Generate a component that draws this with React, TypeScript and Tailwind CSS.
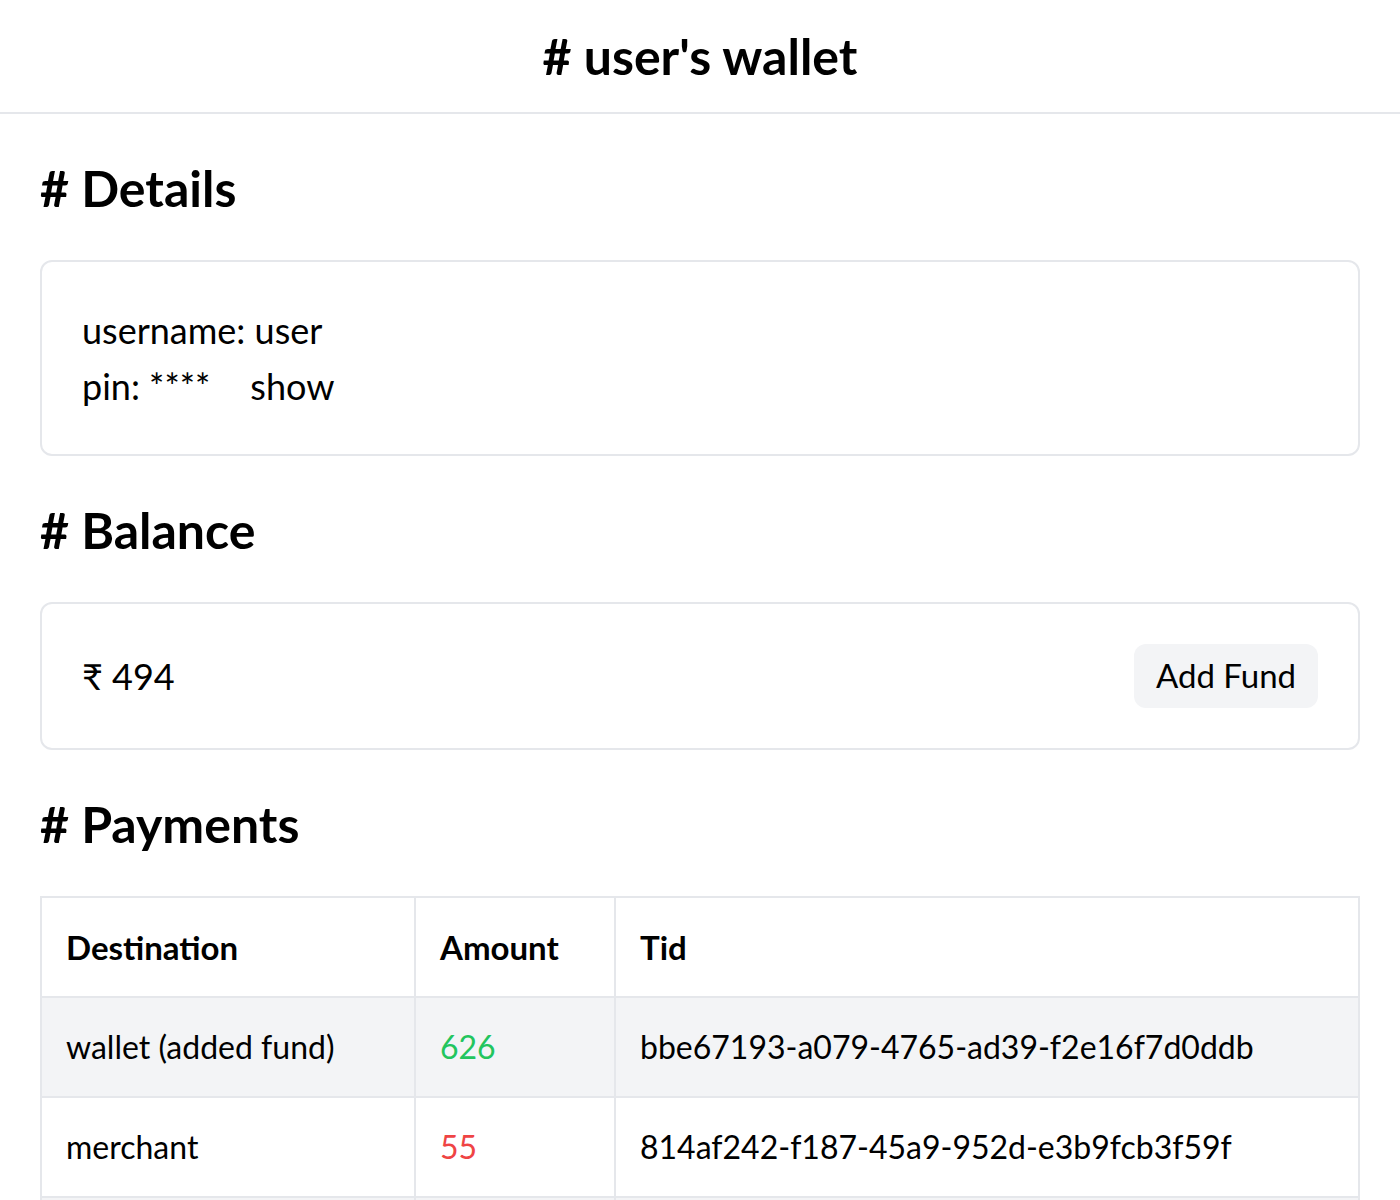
const payments = [
  { destination: 'wallet (added fund)', amount: 626, credit: true, tid: 'bbe67193-a079-4765-ad39-f2e16f7d0ddb' },
  { destination: 'merchant', amount: 55, credit: false, tid: '814af242-f187-45a9-952d-e3b9fcb3f59f' },
  { destination: 'merchant', amount: 120, credit: false, tid: '3c1d9a4e-7b20-4f8e-9a61-0e5d2c7b4a18' },
];

function SectionTitle({ children }: { children: string }) {
  return <h2 className="mt-[42px] text-[50px] leading-[64px] font-bold text-black"># {children}</h2>;
}

export default function App() {
  return (
    <div className="min-h-screen bg-white text-black font-['Lato',sans-serif]">
      <header className="py-6 border-b-2 border-[#e5e7eb] text-center">
        <h1 className="text-[50px] leading-[64px] font-bold"># user's wallet</h1>
      </header>

      <main className="px-10">
        <SectionTitle>Details</SectionTitle>
        <div className="mt-10 border-2 border-[#e5e7eb] rounded-xl p-10 text-[36px] leading-[56px]">
          <p>username: user</p>
          <p>
            pin: ****
            <button className="ml-[40px]">show</button>
          </p>
        </div>

        <SectionTitle>Balance</SectionTitle>
        <div className="mt-10 border-2 border-[#e5e7eb] rounded-xl p-10 flex items-center justify-between">
          <span className="text-[36px] leading-[56px]">₹ 494</span>
          <button className="h-16 w-[184px] bg-[#f3f4f6] rounded-xl text-[33px]">Add Fund</button>
        </div>

        <SectionTitle>Payments</SectionTitle>
        <table className="mt-10 w-full border-collapse border-2 border-[#e5e7eb] text-[32px] leading-[50px] text-left">
          <thead>
            <tr>
              <th className="w-[374px] border-2 border-[#e5e7eb] px-6 py-6 font-bold text-[33px]">Destination</th>
              <th className="w-[200px] border-2 border-[#e5e7eb] px-6 py-6 font-bold text-[33px]">Amount</th>
              <th className="border-2 border-[#e5e7eb] px-6 py-6 font-bold text-[33px]">Tid</th>
            </tr>
          </thead>
          <tbody>
            {payments.map((p, i) => (
              <tr key={p.tid} className={i % 2 === 0 ? 'bg-[#f3f4f6]' : 'bg-white'}>
                <td className="border-2 border-[#e5e7eb] px-6 py-6">{p.destination}</td>
                <td className={`border-2 border-[#e5e7eb] px-6 py-6 ${p.credit ? 'text-[#22c55e]' : 'text-[#ef4444]'}`}>
                  {p.amount}
                </td>
                <td className="border-2 border-[#e5e7eb] px-6 py-6">{p.tid}</td>
              </tr>
            ))}
          </tbody>
        </table>
      </main>
    </div>
  );
}
